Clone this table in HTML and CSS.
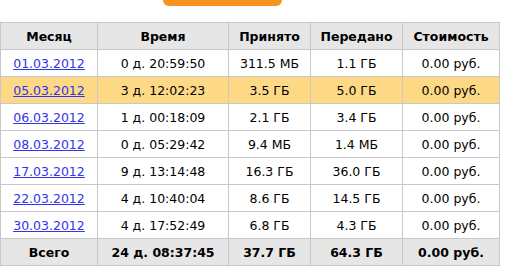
FILE: index.html
```html
<!DOCTYPE html>
<html>
<head>
<meta charset="utf-8">
<link rel="stylesheet" href="styles.css">
</head>
<body>
<div class="tab"></div>
<table class="stats">
<colgroup>
<col class="c1"><col class="c2"><col class="c3"><col class="c4"><col class="c5">
</colgroup>
<thead>
<tr><th>Месяц</th><th>Время</th><th>Принято</th><th>Передано</th><th>Стоимость</th></tr>
</thead>
<tbody>
<tr><td><a href="#">01.03.2012</a></td><td>0 д. 20:59:50</td><td>311.5 МБ</td><td>1.1 ГБ</td><td>0.00 руб.</td></tr>
<tr class="hl"><td><a href="#">05.03.2012</a></td><td>3 д. 12:02:23</td><td>3.5 ГБ</td><td>5.0 ГБ</td><td>0.00 руб.</td></tr>
<tr><td><a href="#">06.03.2012</a></td><td>1 д. 00:18:09</td><td>2.1 ГБ</td><td>3.4 ГБ</td><td>0.00 руб.</td></tr>
<tr><td><a href="#">08.03.2012</a></td><td>0 д. 05:29:42</td><td>9.4 МБ</td><td>1.4 МБ</td><td>0.00 руб.</td></tr>
<tr><td><a href="#">17.03.2012</a></td><td>9 д. 13:14:48</td><td>16.3 ГБ</td><td>36.0 ГБ</td><td>0.00 руб.</td></tr>
<tr><td><a href="#">22.03.2012</a></td><td>4 д. 10:40:04</td><td>8.6 ГБ</td><td>14.5 ГБ</td><td>0.00 руб.</td></tr>
<tr><td><a href="#">30.03.2012</a></td><td>4 д. 17:52:49</td><td>6.8 ГБ</td><td>4.3 ГБ</td><td>0.00 руб.</td></tr>
</tbody>
<tfoot>
<tr><th>Всего</th><th>24 д. 08:37:45</th><th>37.7 ГБ</th><th>64.3 ГБ</th><th>0.00 руб.</th></tr>
</tfoot>
</table>
</body>
</html>
```
FILE: styles.css
```css
html, body {
  margin: 0;
  padding: 0;
  background: #ffffff;
}
body {
  font-family: "DejaVu Sans", Verdana, sans-serif;
  font-size: 12.5px;
  color: #000;
}
.tab {
  width: 119px;
  height: 6px;
  margin-left: 163px;
  margin-bottom: 16px;
  background: #f7941d;
  border-radius: 0 0 6px 6px;
}
.stats {
  border-collapse: collapse;
  table-layout: fixed;
  width: 499px;
}
.c1 { width: 97px; }
.c2 { width: 131px; }
.c3 { width: 82px; }
.c4 { width: 92px; }
.c5 { width: 97px; }
.stats th, .stats td {
  border: 1px solid #c8c8c8;
  height: 26px;
  padding: 0;
  text-align: center;
  vertical-align: middle;
  white-space: nowrap;
}
.stats th {
  background: #e6e6e6;
  font-weight: bold;
}
.stats tr.hl td {
  background: #fdd985;
}
.stats a {
  color: #3333ee;
  text-decoration: underline;
}
```
